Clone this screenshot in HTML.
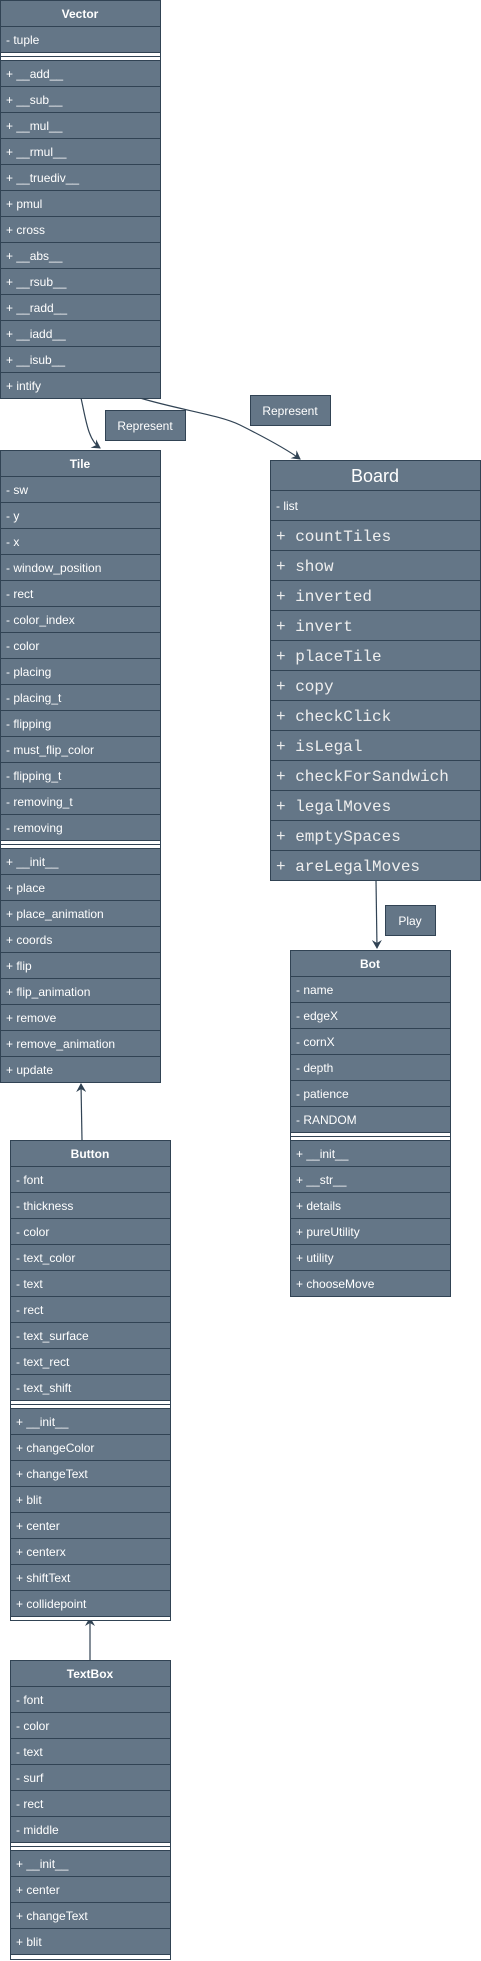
<!DOCTYPE html>
<html><head><meta charset="utf-8"><style>
html,body{margin:0;padding:0;background:#fff;}
svg{display:block}
text{font-family:"Liberation Sans",Arial,sans-serif;font-size:12px;fill:#fff;}
.t{font-weight:bold;text-anchor:middle}
.m{font-family:"Liberation Mono",monospace;font-size:16px;fill:#eee}
.b{font-size:18px;text-anchor:middle}
.r{fill:#647687;stroke:#314354;stroke-width:1}
.s{fill:#fff;stroke:#314354;stroke-width:1}
.l{fill:none;stroke:#314354;stroke-width:1.2}
</style></head><body>
<svg width="481" height="1961" viewBox="0 0 481 1961" xmlns="http://www.w3.org/2000/svg">
<defs><marker id="a" markerWidth="10" markerHeight="10" refX="8" refY="5" orient="auto" markerUnits="userSpaceOnUse"><path d="M0,0 L9,5 L0,10 L3,5 Z" fill="#314354"/></marker></defs>

<!-- arrows -->
<path class="l" d="M81,398 C86,420 88,440 100,448" marker-end="url(#a)"/>
<path class="l" d="M140,398 C180,410 220,415 240,425 C260,435 285,448 300,459" marker-end="url(#a)"/>
<path class="l" d="M376,880 L377,948" marker-end="url(#a)"/>
<path class="l" d="M82,1140 L81,1084" marker-end="url(#a)"/>
<path class="l" d="M90,1660 L90,1618" marker-end="url(#a)"/>

<!-- labels -->
<rect class="r" x="105.5" y="410.5" width="80" height="30"/><text class="t" x="145" y="430" style="font-weight:normal">Represent</text>
<rect class="r" x="250.5" y="395.5" width="80" height="30"/><text class="t" x="290" y="415" style="font-weight:normal">Represent</text>
<rect class="r" x="385.5" y="905.5" width="50" height="30"/><text class="t" x="410" y="925" style="font-weight:normal">Play</text>

<!-- Vector -->
<g>
<rect class="r" x="0.5" y="0.5" width="160" height="26"/><text class="t" x="80" y="18">Vector</text>
<rect class="r" x="0.5" y="26.5" width="160" height="26"/><text x="6" y="44">- tuple</text>
<rect class="s" x="0.5" y="52.5" width="160" height="8"/><line x1="0" y1="56.5" x2="161" y2="56.5" stroke="#314354"/>
<rect class="r" x="0.5" y="60.5" width="160" height="26"/><text x="6" y="78">+ __add__</text>
<rect class="r" x="0.5" y="86.5" width="160" height="26"/><text x="6" y="104">+ __sub__</text>
<rect class="r" x="0.5" y="112.5" width="160" height="26"/><text x="6" y="130">+ __mul__</text>
<rect class="r" x="0.5" y="138.5" width="160" height="26"/><text x="6" y="156">+ __rmul__</text>
<rect class="r" x="0.5" y="164.5" width="160" height="26"/><text x="6" y="182">+ __truediv__</text>
<rect class="r" x="0.5" y="190.5" width="160" height="26"/><text x="6" y="208">+ pmul</text>
<rect class="r" x="0.5" y="216.5" width="160" height="26"/><text x="6" y="234">+ cross</text>
<rect class="r" x="0.5" y="242.5" width="160" height="26"/><text x="6" y="260">+ __abs__</text>
<rect class="r" x="0.5" y="268.5" width="160" height="26"/><text x="6" y="286">+ __rsub__</text>
<rect class="r" x="0.5" y="294.5" width="160" height="26"/><text x="6" y="312">+ __radd__</text>
<rect class="r" x="0.5" y="320.5" width="160" height="26"/><text x="6" y="338">+ __iadd__</text>
<rect class="r" x="0.5" y="346.5" width="160" height="26"/><text x="6" y="364">+ __isub__</text>
<rect class="r" x="0.5" y="372.5" width="160" height="26"/><text x="6" y="390">+ intify</text>
</g>

<!-- Tile -->
<g>
<rect class="r" x="0.5" y="450.5" width="160" height="26"/><text class="t" x="80" y="468">Tile</text>
<rect class="r" x="0.5" y="476.5" width="160" height="26"/><text x="6" y="494">- sw</text>
<rect class="r" x="0.5" y="502.5" width="160" height="26"/><text x="6" y="520">- y</text>
<rect class="r" x="0.5" y="528.5" width="160" height="26"/><text x="6" y="546">- x</text>
<rect class="r" x="0.5" y="554.5" width="160" height="26"/><text x="6" y="572">- window_position</text>
<rect class="r" x="0.5" y="580.5" width="160" height="26"/><text x="6" y="598">- rect</text>
<rect class="r" x="0.5" y="606.5" width="160" height="26"/><text x="6" y="624">- color_index</text>
<rect class="r" x="0.5" y="632.5" width="160" height="26"/><text x="6" y="650">- color</text>
<rect class="r" x="0.5" y="658.5" width="160" height="26"/><text x="6" y="676">- placing</text>
<rect class="r" x="0.5" y="684.5" width="160" height="26"/><text x="6" y="702">- placing_t</text>
<rect class="r" x="0.5" y="710.5" width="160" height="26"/><text x="6" y="728">- flipping</text>
<rect class="r" x="0.5" y="736.5" width="160" height="26"/><text x="6" y="754">- must_flip_color</text>
<rect class="r" x="0.5" y="762.5" width="160" height="26"/><text x="6" y="780">- flipping_t</text>
<rect class="r" x="0.5" y="788.5" width="160" height="26"/><text x="6" y="806">- removing_t</text>
<rect class="r" x="0.5" y="814.5" width="160" height="26"/><text x="6" y="832">- removing</text>
<rect class="s" x="0.5" y="840.5" width="160" height="8"/><line x1="0" y1="844.5" x2="161" y2="844.5" stroke="#314354"/>
<rect class="r" x="0.5" y="848.5" width="160" height="26"/><text x="6" y="866">+ __init__</text>
<rect class="r" x="0.5" y="874.5" width="160" height="26"/><text x="6" y="892">+ place</text>
<rect class="r" x="0.5" y="900.5" width="160" height="26"/><text x="6" y="918">+ place_animation</text>
<rect class="r" x="0.5" y="926.5" width="160" height="26"/><text x="6" y="944">+ coords</text>
<rect class="r" x="0.5" y="952.5" width="160" height="26"/><text x="6" y="970">+ flip</text>
<rect class="r" x="0.5" y="978.5" width="160" height="26"/><text x="6" y="996">+ flip_animation</text>
<rect class="r" x="0.5" y="1004.5" width="160" height="26"/><text x="6" y="1022">+ remove</text>
<rect class="r" x="0.5" y="1030.5" width="160" height="26"/><text x="6" y="1048">+ remove_animation</text>
<rect class="r" x="0.5" y="1056.5" width="160" height="26"/><text x="6" y="1074">+ update</text>
</g>

<!-- Board -->
<g>
<rect class="r" x="270.5" y="460.5" width="210" height="30"/><text class="b" x="375" y="482">Board</text>
<rect class="r" x="270.5" y="490.5" width="210" height="30"/><text x="276" y="510">- list</text>
<rect class="r" x="270.5" y="520.5" width="210" height="30"/><text class="m" x="276" y="541">+ countTiles</text>
<rect class="r" x="270.5" y="550.5" width="210" height="30"/><text class="m" x="276" y="571">+ show</text>
<rect class="r" x="270.5" y="580.5" width="210" height="30"/><text class="m" x="276" y="601">+ inverted</text>
<rect class="r" x="270.5" y="610.5" width="210" height="30"/><text class="m" x="276" y="631">+ invert</text>
<rect class="r" x="270.5" y="640.5" width="210" height="30"/><text class="m" x="276" y="661">+ placeTile</text>
<rect class="r" x="270.5" y="670.5" width="210" height="30"/><text class="m" x="276" y="691">+ copy</text>
<rect class="r" x="270.5" y="700.5" width="210" height="30"/><text class="m" x="276" y="721">+ checkClick</text>
<rect class="r" x="270.5" y="730.5" width="210" height="30"/><text class="m" x="276" y="751">+ isLegal</text>
<rect class="r" x="270.5" y="760.5" width="210" height="30"/><text class="m" x="276" y="781">+ checkForSandwich</text>
<rect class="r" x="270.5" y="790.5" width="210" height="30"/><text class="m" x="276" y="811">+ legalMoves</text>
<rect class="r" x="270.5" y="820.5" width="210" height="30"/><text class="m" x="276" y="841">+ emptySpaces</text>
<rect class="r" x="270.5" y="850.5" width="210" height="30"/><text class="m" x="276" y="871">+ areLegalMoves</text>
</g>

<!-- Bot -->
<g>
<rect class="r" x="290.5" y="950.5" width="160" height="26"/><text class="t" x="370" y="968">Bot</text>
<rect class="r" x="290.5" y="976.5" width="160" height="26"/><text x="296" y="994">- name</text>
<rect class="r" x="290.5" y="1002.5" width="160" height="26"/><text x="296" y="1020">- edgeX</text>
<rect class="r" x="290.5" y="1028.5" width="160" height="26"/><text x="296" y="1046">- cornX</text>
<rect class="r" x="290.5" y="1054.5" width="160" height="26"/><text x="296" y="1072">- depth</text>
<rect class="r" x="290.5" y="1080.5" width="160" height="26"/><text x="296" y="1098">- patience</text>
<rect class="r" x="290.5" y="1106.5" width="160" height="26"/><text x="296" y="1124">- RANDOM</text>
<rect class="s" x="290.5" y="1132.5" width="160" height="8"/><line x1="290" y1="1136.5" x2="451" y2="1136.5" stroke="#314354"/>
<rect class="r" x="290.5" y="1140.5" width="160" height="26"/><text x="296" y="1158">+ __init__</text>
<rect class="r" x="290.5" y="1166.5" width="160" height="26"/><text x="296" y="1184">+ __str__</text>
<rect class="r" x="290.5" y="1192.5" width="160" height="26"/><text x="296" y="1210">+ details</text>
<rect class="r" x="290.5" y="1218.5" width="160" height="26"/><text x="296" y="1236">+ pureUtility</text>
<rect class="r" x="290.5" y="1244.5" width="160" height="26"/><text x="296" y="1262">+ utility</text>
<rect class="r" x="290.5" y="1270.5" width="160" height="26"/><text x="296" y="1288">+ chooseMove</text>
</g>

<!-- Button -->
<g>
<rect class="r" x="10.5" y="1140.5" width="160" height="26"/><text class="t" x="90" y="1158">Button</text>
<rect class="r" x="10.5" y="1166.5" width="160" height="26"/><text x="16" y="1184">- font</text>
<rect class="r" x="10.5" y="1192.5" width="160" height="26"/><text x="16" y="1210">- thickness</text>
<rect class="r" x="10.5" y="1218.5" width="160" height="26"/><text x="16" y="1236">- color</text>
<rect class="r" x="10.5" y="1244.5" width="160" height="26"/><text x="16" y="1262">- text_color</text>
<rect class="r" x="10.5" y="1270.5" width="160" height="26"/><text x="16" y="1288">- text</text>
<rect class="r" x="10.5" y="1296.5" width="160" height="26"/><text x="16" y="1314">- rect</text>
<rect class="r" x="10.5" y="1322.5" width="160" height="26"/><text x="16" y="1340">- text_surface</text>
<rect class="r" x="10.5" y="1348.5" width="160" height="26"/><text x="16" y="1366">- text_rect</text>
<rect class="r" x="10.5" y="1374.5" width="160" height="26"/><text x="16" y="1392">- text_shift</text>
<rect class="s" x="10.5" y="1400.5" width="160" height="8"/><line x1="10" y1="1404.5" x2="171" y2="1404.5" stroke="#314354"/>
<rect class="r" x="10.5" y="1408.5" width="160" height="26"/><text x="16" y="1426">+ __init__</text>
<rect class="r" x="10.5" y="1434.5" width="160" height="26"/><text x="16" y="1452">+ changeColor</text>
<rect class="r" x="10.5" y="1460.5" width="160" height="26"/><text x="16" y="1478">+ changeText</text>
<rect class="r" x="10.5" y="1486.5" width="160" height="26"/><text x="16" y="1504">+ blit</text>
<rect class="r" x="10.5" y="1512.5" width="160" height="26"/><text x="16" y="1530">+ center</text>
<rect class="r" x="10.5" y="1538.5" width="160" height="26"/><text x="16" y="1556">+ centerx</text>
<rect class="r" x="10.5" y="1564.5" width="160" height="26"/><text x="16" y="1582">+ shiftText</text>
<rect class="r" x="10.5" y="1590.5" width="160" height="26"/><text x="16" y="1608">+ collidepoint</text>
<rect class="s" x="10.5" y="1616.5" width="160" height="4"/>
</g>

<!-- TextBox -->
<g>
<rect class="r" x="10.5" y="1660.5" width="160" height="26"/><text class="t" x="90" y="1678">TextBox</text>
<rect class="r" x="10.5" y="1686.5" width="160" height="26"/><text x="16" y="1704">- font</text>
<rect class="r" x="10.5" y="1712.5" width="160" height="26"/><text x="16" y="1730">- color</text>
<rect class="r" x="10.5" y="1738.5" width="160" height="26"/><text x="16" y="1756">- text</text>
<rect class="r" x="10.5" y="1764.5" width="160" height="26"/><text x="16" y="1782">- surf</text>
<rect class="r" x="10.5" y="1790.5" width="160" height="26"/><text x="16" y="1808">- rect</text>
<rect class="r" x="10.5" y="1816.5" width="160" height="26"/><text x="16" y="1834">- middle</text>
<rect class="s" x="10.5" y="1842.5" width="160" height="8"/><line x1="10" y1="1846.5" x2="171" y2="1846.5" stroke="#314354"/>
<rect class="r" x="10.5" y="1850.5" width="160" height="26"/><text x="16" y="1868">+ __init__</text>
<rect class="r" x="10.5" y="1876.5" width="160" height="26"/><text x="16" y="1894">+ center</text>
<rect class="r" x="10.5" y="1902.5" width="160" height="26"/><text x="16" y="1920">+ changeText</text>
<rect class="r" x="10.5" y="1928.5" width="160" height="26"/><text x="16" y="1946">+ blit</text>
<rect class="s" x="10.5" y="1954.5" width="160" height="5"/>
</g>
</svg>
</body></html>
